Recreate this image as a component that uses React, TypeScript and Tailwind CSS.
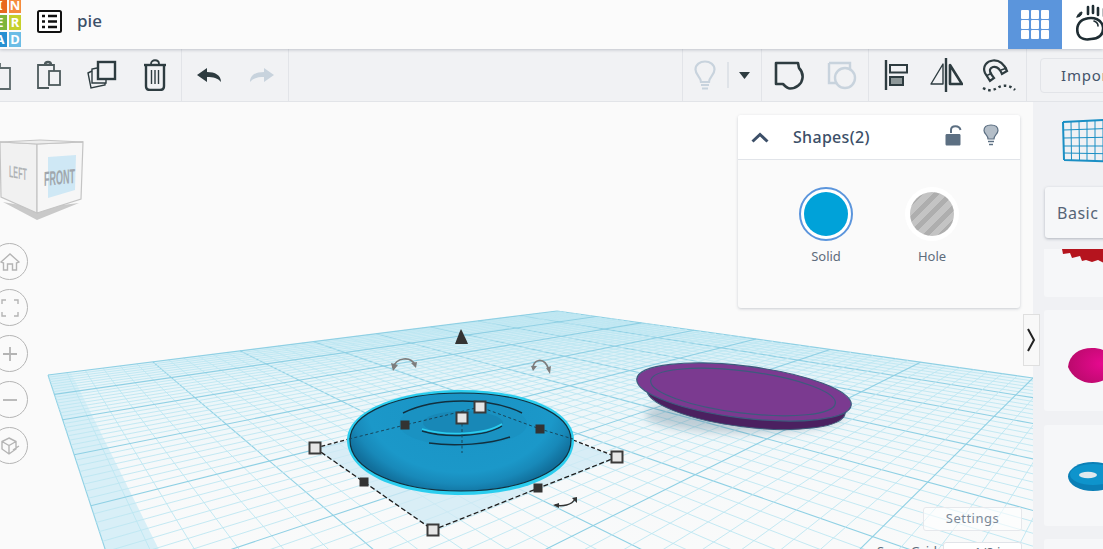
import type { ReactNode } from "react";

const B = [557, 311];
const R = [1033, 378];
const F = [290, 1113];
const L = [48, 375];

// unit square -> image plane, u runs along the left edge, v runs back to front-left
function project(u: number, v: number): [number, number] {
  const dx1 = R[0] - F[0];
  const dx2 = L[0] - F[0];
  const sx = B[0] - R[0] + F[0] - L[0];
  const dy1 = R[1] - F[1];
  const dy2 = L[1] - F[1];
  const sy = B[1] - R[1] + F[1] - L[1];
  const den = dx1 * dy2 - dx2 * dy1;
  const g = (sx * dy2 - dx2 * sy) / den;
  const h = (dx1 * sy - sx * dy1) / den;
  const a = R[0] - B[0] + g * R[0];
  const b = L[0] - B[0] + h * L[0];
  const d = R[1] - B[1] + g * R[1];
  const e = L[1] - B[1] + h * L[1];
  const w = g * u + h * v + 1;
  return [(a * u + b * v + B[0]) / w, (d * u + e * v + B[1]) / w];
}

const U_MAX = 8 / 7;
const MINOR_U = 8;
const MINOR_V = 6;

function pts(list: [number, number][]) {
  return list.map((p) => `${p[0].toFixed(1)},${p[1].toFixed(1)}`).join(" ");
}

function WorkplaneGrid() {
  const lines: ReactNode[] = [];
  for (let i = 0; i <= 8 * MINOR_V; i++) {
    const major = i % MINOR_V === 0;
    const v = i / (8 * MINOR_V);
    const a = project(0, v);
    const b = project(U_MAX, v);
    lines.push(
      <line key={`v${i}`} x1={a[0]} y1={a[1]} x2={b[0]} y2={b[1]} stroke={major ? "#8fd0e4" : "#bde6f2"} strokeWidth={major ? 1.1 : 0.9} />
    );
  }
  for (let i = 0; i <= 8 * MINOR_U; i++) {
    const major = i % MINOR_U === 0;
    const u = i / (7 * MINOR_U);
    const a = project(u, 0);
    const b = project(u, 1);
    lines.push(
      <line key={`u${i}`} x1={a[0]} y1={a[1]} x2={b[0]} y2={b[1]} stroke={major ? "#8fd0e4" : "#bde6f2"} strokeWidth={major ? 1.1 : 0.9} />
    );
  }
  return (
    <g>
      <polygon points={pts([project(0, 0), project(U_MAX, 0), project(U_MAX, 1), project(0, 1)])} fill="url(#plate)" />
      <polygon points={pts([project(0, 0.975), project(U_MAX, 0.975), project(U_MAX, 1), project(0, 1)])} fill="#d8eff7" />
      {lines}
    </g>
  );
}

function Handle({ x, y, dark }: { x: number; y: number; dark?: boolean }) {
  if (dark) return <rect x={x - 4.5} y={y - 4.5} width={9} height={9} fill="#333" />;
  return <rect x={x - 5.5} y={y - 5.5} width={11} height={11} fill="#e6e6e6" stroke="#3a3a3a" strokeWidth={2} />;
}

function Scene() {
  return (
    <svg className="absolute inset-0" width={1033} height={447} viewBox="0 102 1033 447">
      <defs>
        <linearGradient id="plate" x1="0" y1="311" x2="0" y2="549" gradientUnits="userSpaceOnUse">
          <stop offset="0" stopColor="#c7e9f4" />
          <stop offset="0.3" stopColor="#e9f5f9" />
          <stop offset="0.7" stopColor="#f7f9fa" />
          <stop offset="1" stopColor="#f9fafa" />
        </linearGradient>
        <radialGradient id="torus" cx="461" cy="0" r="125" gradientUnits="userSpaceOnUse" gradientTransform="translate(0 405) scale(1 0.72)">
          <stop offset="0" stopColor="#1a93c4" />
          <stop offset="0.75" stopColor="#1b98c9" />
          <stop offset="0.88" stopColor="#1889b9" />
          <stop offset="1" stopColor="#116f9b" />
        </radialGradient>
        <filter id="soft" x="-20%" y="-50%" width="140%" height="200%">
          <feGaussianBlur stdDeviation="4" />
        </filter>
      </defs>
      <WorkplaneGrid />

      {/* selection footprint */}
      <polygon points="315,448 433,530 617,457 480,407" fill="#cfe9f4" opacity={0.75} />
      <path d="M315,448 L433,530 L617,457" fill="none" stroke="#1c1c1c" strokeWidth={1.3} strokeDasharray="5 2.5" />
      <path d="M315,448 L349,439 M573,440 L617,457" fill="none" stroke="#1c1c1c" strokeWidth={1.3} strokeDasharray="4 2.5" />

      {/* torus */}
      <path d="M347,440 C347,411 398,390 461,390 C526,390 574,411 574,440 C574,473 526,495 461,495 C398,495 347,473 347,440 Z" fill="#2bcdee" />
      <path d="M350,440 C350,413 398,393 461,393 C524,393 571,413 571,440 C571,470 524,491 461,491 C398,491 350,470 350,440 Z" fill="url(#torus)" stroke="#12303f" strokeWidth={1.2} />
      <ellipse cx="463" cy="424" rx="64" ry="22" fill="#1a92c2" />
      <ellipse cx="463" cy="423" rx="40" ry="12" fill="#1888b7" />
      <path d="M403,413 C435,397 490,397 522,413" fill="none" stroke="#12303f" strokeWidth={1.5} />
      <path d="M429,443 C455,447 490,444 510,437" fill="none" stroke="#12303f" strokeWidth={1.5} />
      <path d="M422,431 C445,438 485,437 502,426" fill="none" stroke="#12303f" strokeWidth={1.4} />
      <path d="M422,429 C445,436 485,435 502,424" fill="none" stroke="#2bcdee" strokeWidth={1.6} />
      <path d="M349,439 L405,425 L480,407 L540,429 L573,439" fill="none" stroke="#17465c" strokeWidth={1} strokeDasharray="3 2.5" />
      <path d="M462,418 V453" fill="none" stroke="#17465c" strokeWidth={1} strokeDasharray="3 2.5" />

      <Handle x={315} y={448} />
      <Handle x={617} y={457} />
      <Handle x={433} y={530} />
      <Handle x={480} y={407} />
      <Handle x={462} y={418} />
      <Handle x={405} y={425} dark />
      <Handle x={540} y={429} dark />
      <Handle x={364} y={482} dark />
      <Handle x={538} y={488} dark />

      {/* move + rotate gizmos */}
      <path d="M461,329 C463,333 466,339 468,344 H455 C457,339 459,333 461,329 Z" fill="#333" />
      <path d="M393,368 C396,357 411,356 415,365" fill="none" stroke="#7d7d7d" strokeWidth={1.6} />
      <path d="M391,363 L393,371 L398,365 Z M411,363 L417,362 L416,368 Z" fill="#7d7d7d" />
      <path d="M533,369 C532,360 544,355 549,370" fill="none" stroke="#7d7d7d" strokeWidth={1.6} />
      <path d="M531,366 L537,366 L533,371 Z M546,368 L551,366 L550,374 Z" fill="#7d7d7d" />
      <path d="M555,505 C562,507 572,505 575,499" fill="none" stroke="#333" strokeWidth={1.4} />
      <path d="M553,505 L559,503 L559,508 Z M572,498 L577,497 L577,503 Z" fill="#333" />

      {/* purple disc */}
      <ellipse cx="745" cy="415" rx="100" ry="18" fill="#4d6f86" opacity={0.3} filter="url(#soft)" />
      <ellipse cx="746" cy="401" rx="100" ry="26" transform="rotate(7 746 401)" fill="#4b2060" stroke="#3b5a78" strokeWidth={1} />
      <ellipse cx="744" cy="392" rx="108" ry="26" transform="rotate(7 744 392)" fill="#7b3a90" stroke="#3d5b7d" strokeWidth={1.2} />
      <ellipse cx="743" cy="392" rx="93" ry="21" transform="rotate(7 743 392)" fill="none" stroke="#3d5b7d" strokeWidth={1.2} />
    </svg>
  );
}

function ViewCube() {
  return (
    <svg className="absolute left-0 top-[30px]" width={90} height={90} viewBox="0 132 90 90">
      <polygon points="3,202 37,220 79,203 37,208" fill="#c9c9c9" />
      <polygon points="0,142 37,144 37,213 1,197" fill="#f1f1f1" stroke="#c4c4c4" strokeWidth={1.2} />
      <polygon points="37,144 83,142 81,199 37,213" fill="#f6f6f6" stroke="#c4c4c4" strokeWidth={1.2} />
      <polygon points="0,142 40,140 83,142 37,144" fill="#ededed" stroke="#c4c4c4" strokeWidth={1} />
      <polygon points="48,157 76,155 75,190 48,198" fill="#cfe8f5" />
      <text transform="matrix(0.55 0.1 0 1.3 9 177)" fontFamily="'Liberation Sans', sans-serif" fontSize={13} fontWeight={700} fill="#b0b3b6">LEFT</text>
      <text transform="matrix(0.6 -0.06 0 1.35 44 186)" fontFamily="'Liberation Sans', sans-serif" fontSize={15} fontWeight={700} fill="#a0a6ac">FRONT</text>
    </svg>
  );
}

function RoundTool({ children }: { children: ReactNode }) {
  return (
    <div className="flex h-[37px] w-[37px] items-center justify-center rounded-full border border-[#b5b5b5] bg-[#fafafa]">
      {children}
    </div>
  );
}

function ViewTools() {
  const c = { fill: "none", stroke: "#b4b4b4", strokeWidth: 1.4 };
  return (
    <div className="absolute left-[-9px] top-[141px] flex flex-col gap-[9px]">
      <RoundTool>
        <svg width="20" height="20" viewBox="0 0 20 20" {...c}><path d="M1,10 L10,2 L19,10 L16.5,11 V18 H12.5 V12 H7.5 V18 H3.5 V11 Z" /></svg>
      </RoundTool>
      <RoundTool>
        <svg width="18" height="18" viewBox="0 0 18 18" {...c}><path d="M1,5 V1 H5 M13,1 H17 V5 M17,13 V17 H13 M5,17 H1 V13" /></svg>
      </RoundTool>
      <RoundTool>
        <svg width="16" height="16" viewBox="0 0 16 16" {...c} strokeWidth={1.8}><path d="M8,1 V15 M1,8 H15" /></svg>
      </RoundTool>
      <RoundTool>
        <svg width="16" height="16" viewBox="0 0 16 16" {...c} strokeWidth={1.8}><path d="M1,8 H15" /></svg>
      </RoundTool>
      <RoundTool>
        <svg width="20" height="20" viewBox="0 0 20 20" {...c}><path d="M9,2 L16,5.5 V13 L9,18 L2,13 V5.5 Z M2,5.5 L9,9.5 L16,5.5 M9,9.5 V18 M13,14 L19,10" /></svg>
      </RoundTool>
    </div>
  );
}

function Logo() {
  const tiles = [
    ["bg-[#e8691f]", "I"],
    ["bg-[#f58b3d]", "N"],
    ["bg-[#7db53c]", "E"],
    ["bg-[#c6d02b]", "R"],
    ["bg-[#2690d2]", "A"],
    ["bg-[#6cbde6]", "D"],
  ];
  return (
    <div className="-mt-[2px] -ml-[7px] grid grid-cols-[14px_12px] gap-x-[2px] gap-y-[2px] self-start">
      {tiles.map(([color, letter]) => (
        <div key={letter} className={`flex h-[15px] items-center justify-center text-[13px] font-bold text-white ${color}`}>
          {letter}
        </div>
      ))}
    </div>
  );
}

function Header() {
  return (
    <header className="relative z-10 flex h-[49px] shrink-0 items-center overflow-hidden bg-[#fbfbfb] shadow-[0_1px_3px_rgba(80,90,110,0.3)]">
      <Logo />
      <svg className="-mt-[7px] ml-[16px]" width="25" height="23" viewBox="0 0 25 23">
        <rect x="1" y="1" width="23" height="21" rx="1.5" fill="#fff" stroke="#111" strokeWidth="2" />
        <path d="M5,6 H8 M11,6 H20 M5,11.5 H8 M11,11.5 H20 M5,17 H8 M11,17 H20" stroke="#111" strokeWidth="2.4" />
      </svg>
      <span className="-mt-[7px] ml-[15px] text-[17px] font-medium text-[#3c4f68]">pie</span>
      <div className="flex-1" />
      <div className="flex h-full w-[54px] items-center justify-center bg-[#5b95dc]">
        <div className="grid grid-cols-3 gap-[1.5px]">
          {[0, 1, 2, 3, 4, 5, 6, 7, 8].map((i) => (
            <div key={i} className="h-[8.5px] w-[8.5px] rounded-[1px] bg-white" />
          ))}
        </div>
      </div>
      <div className="flex h-full w-[41px] items-center bg-white pl-[14px]">
        <svg className="-mt-[4px] shrink-0" width="36" height="38" viewBox="0 0 36 38" fill="none" stroke="#1f2d33" strokeWidth="2.6" strokeLinecap="round">
          <path d="M9,15 C2,17 0,24 2,30 C4,35 10,36 15,35 C22,35 28,31 27,23 C26,16 18,12 9,15 Z" />
          <path d="M18,17 C21,18 22,20 22,22" strokeWidth="1.6" />
          <path d="M12,3 V10 M17,2 V9 M22,4 V11 M28,5 V12" />
          <path d="M1,13 C2,9 5,8 6,8 C6,11 4,13 1,13 Z" fill="#1f2d33" strokeWidth="1" />
        </svg>
      </div>
    </header>
  );
}

const DARK = "#2e3c40";
const OFF = "#c8d3dd";

function ToolIcon({ w = 53, children }: { w?: number; children: ReactNode }) {
  return (
    <div className="flex h-full shrink-0 items-center justify-center" style={{ width: w }}>
      {children}
    </div>
  );
}

function Toolbar() {
  return (
    <div className="flex h-[53px] shrink-0 items-center border-b border-[#e2e4e8] bg-[#f1f2f4]">
      <div className="-ml-[31px] flex h-full shrink-0 border-r border-[#e2e4e8]">
        <ToolIcon>
          <svg className="overflow-visible" width="30" height="30" viewBox="0 0 30 30" fill="none" stroke="#5d6a6c" strokeWidth="1.8">
            <path d="M10,4 H19 V8 H29 V29 H10 Z" />
          </svg>
        </ToolIcon>
        <ToolIcon>
          <svg width="26" height="30" viewBox="0 0 26 30" fill="none" stroke="#4d5a5c" strokeWidth="1.8">
            <path d="M7,5 H2 V28 H13 M7,5 H18 V11" />
            <path d="M9,5 C9,1 15,1 15,5" strokeWidth="2.4" />
            <rect x="13" y="11" width="11" height="14" fill="#f1f2f4" />
          </svg>
        </ToolIcon>
        <ToolIcon>
          <svg width="30" height="30" viewBox="0 0 30 30" fill="none" stroke={DARK}>
            <rect x="11" y="2" width="17" height="17" strokeWidth="2.4" />
            <path d="M10,8 L5,9 V23 H19 V20" strokeWidth="1.4" />
            <path d="M5,11 L1,13 L4,28 L18,25 V23" strokeWidth="1.4" />
          </svg>
        </ToolIcon>
        <ToolIcon>
          <svg width="24" height="32" viewBox="0 0 24 32" fill="none" stroke={DARK}>
            <path d="M1,6 H23" strokeWidth="2.4" />
            <path d="M8,5 C8,0 16,0 16,5" strokeWidth="1.8" />
            <path d="M3,7 V27 C3,30 5,31 7,31 H17 C19,31 21,30 21,27 V7" strokeWidth="2.4" />
            <path d="M8.5,11 V25 M12,11 V25 M15.5,11 V25" strokeWidth="1.4" />
          </svg>
        </ToolIcon>
      </div>
      <div className="flex h-full w-[107px] shrink-0 justify-center border-r border-[#e2e4e8]">
        <ToolIcon>
          <svg width="24" height="15" viewBox="0 0 24 15" fill={DARK}>
            <path d="M0,7 L10,0 V4 C18,4 24,7 24,14 C21,10 16,9 10,9 V14 Z" />
          </svg>
        </ToolIcon>
        <ToolIcon>
          <svg width="24" height="15" viewBox="0 0 24 15" fill={OFF}>
            <path d="M24,7 L14,0 V4 C6,4 0,7 0,14 C3,10 8,9 14,9 V14 Z" />
          </svg>
        </ToolIcon>
      </div>
      <div className="flex-1" />
      <div className="flex h-full w-[80px] shrink-0 items-center border-x border-[#e2e4e8]">
        <ToolIcon w={44}>
          <svg width="22" height="31" viewBox="0 0 22 31" fill="none" stroke={OFF} strokeWidth="2.2">
            <path d="M7,22 C7,17 1.5,15 1.5,9.5 C1.5,4.5 6,1.5 11,1.5 C16,1.5 20.5,4.5 20.5,9.5 C20.5,15 15,17 15,22 Z" />
            <path d="M7,25 H15 M8,28.5 H14" />
          </svg>
        </ToolIcon>
        <div className="h-[26px] w-[2px] bg-[#dfe3e8]" />
        <ToolIcon w={30}>
          <svg width="11" height="7" viewBox="0 0 11 7" fill={DARK}><path d="M0,0 H11 L5.5,7 Z" /></svg>
        </ToolIcon>
      </div>
      <div className="flex h-full w-[107px] shrink-0 border-r border-[#e2e4e8]">
        <ToolIcon>
          <svg width="30" height="29" viewBox="0 0 30 29" fill="none" stroke={DARK} strokeWidth="2.6" strokeLinejoin="round">
            <path d="M2,2 H24 L25,7 C28,10 29,13 28.5,17 C28,23 22,27.5 16,27.5 C13,27.5 11,25 9,23 H2 Z" />
          </svg>
        </ToolIcon>
        <ToolIcon>
          <svg width="30" height="29" viewBox="0 0 30 29" fill="none" stroke={OFF} strokeWidth="2.4">
            <path d="M2,2 H23 V8 M2,2 V22 H9" />
            <circle cx="18" cy="17" r="10" />
          </svg>
        </ToolIcon>
      </div>
      <div className="flex h-full w-[158px] shrink-0 items-center border-r border-[#e2e4e8] pl-[2px]">
        <ToolIcon w={50}>
          <svg width="24" height="32" viewBox="0 0 24 32" fill="none" stroke={DARK}>
            <path d="M2,1 V31" strokeWidth="2.4" />
            <rect x="6" y="6" width="17" height="7.5" strokeWidth="2" />
            <rect x="6" y="18" width="13" height="8" strokeWidth="2" fill="#8e9899" />
          </svg>
        </ToolIcon>
        <ToolIcon w={50}>
          <svg width="34" height="34" viewBox="0 0 34 34" fill="none" stroke={DARK} strokeLinejoin="round">
            <path d="M17,0 V34" strokeWidth="2.4" />
            <path d="M14,6 V26 H2 Z" strokeWidth="1.4" />
            <path d="M21,7 V26 H33 Z" strokeWidth="2.6" />
          </svg>
        </ToolIcon>
        <ToolIcon w={55}>
          <svg width="34" height="33" viewBox="0 0 34 33" fill="none" stroke={DARK}>
            <path d="M8,22 L3,14 C0,7 5,2 11,1.5 C17,1 22,5 25,12 L20,15 C18,10 15,7 11,8 C8,9 7,11 9,15 L12,19 Z" strokeWidth="2.2" />
            <path d="M4,17 L10,14 M19,11 L25,9" strokeWidth="1.4" />
            <path d="M1,29 C8,33 12,31 17,28 C22,26 28,26 33,31" strokeWidth="2.4" strokeDasharray="2.5 3" />
          </svg>
        </ToolIcon>
      </div>
      <div className="-mr-[57px] ml-[13px] flex h-[35px] w-[120px] shrink-0 items-center rounded-[4px] border border-[#e2e4e8] pl-[20px] text-[15px] tracking-[0.8px] text-[#44546a]">
        Import
      </div>
    </div>
  );
}

function ShapesPanel() {
  return (
    <div className="absolute left-[738px] top-[13px] h-[193px] w-[282px] rounded-[3px] bg-[#fafafa] shadow-[0_1px_3px_rgba(60,70,90,0.25)]">
      <div className="flex h-[45px] items-center rounded-t-[3px] border-b border-[#e1e4e9] bg-white pl-[13px]">
        <svg width="18" height="11" viewBox="0 0 18 11" fill="none" stroke="#3c4f68" strokeWidth="3"><path d="M1.5,9.5 L9,2.5 L16.5,9.5" /></svg>
        <span className="ml-[24px] text-[16px] font-medium tracking-[0.3px] text-[#3c4f68]">Shapes(2)</span>
        <div className="ml-auto mr-[21px] flex gap-[21px]">
          <svg className="-mt-[3px]" width="17" height="21" viewBox="0 0 17 21" fill="#5c6f82">
            <path d="M2,9 H14 C15,9 15.5,9.5 15.5,10.5 V19 C15.5,20 15,20.5 14,20.5 H2 C1,20.5 0.5,20 0.5,19 V10.5 C0.5,9.5 1,9 2,9 Z" />
            <path d="M6,8 V5 C6,0 14.5,0 15.5,5" fill="none" stroke="#5c6f82" strokeWidth="2" />
          </svg>
          <svg className="-mt-[4px]" width="16" height="22" viewBox="0 0 16 22" fill="#b4bec8" stroke="#5c6f82" strokeWidth="1.2">
            <path d="M5,15 C5,11 1,10 1,6.5 C1,3 4,1 8,1 C12,1 15,3 15,6.5 C15,10 11,11 11,15 Z" />
            <path d="M5,17.5 H11 M6,20.5 H10" fill="none" strokeWidth="1.5" />
          </svg>
        </div>
      </div>
      <div className="flex pl-[61px] pt-[27px]">
        <div className="flex w-[54px] flex-col items-center">
          <div className="flex h-[54px] w-[54px] items-center justify-center rounded-full border-2 border-[#5b95dc] bg-white">
            <div className="h-[44px] w-[44px] rounded-full bg-[#00a2d9]" />
          </div>
          <span className="mt-[6px] text-[13px] text-[#5e6c7c]">Solid</span>
        </div>
        <div className="ml-[52px] flex w-[54px] flex-col items-center">
          <div className="flex h-[54px] w-[54px] items-center justify-center rounded-full bg-white">
            <div className="h-[44px] w-[44px] rounded-full bg-[repeating-linear-gradient(135deg,#c4c4c4_0,#c4c4c4_6px,#aeaeae_6px,#aeaeae_11px)]" />
          </div>
          <span className="mt-[6px] text-[13px] text-[#5e6c7c]">Hole</span>
        </div>
      </div>
    </div>
  );
}

function Sidebar() {
  return (
    <aside className="relative flex w-[70px] shrink-0 flex-col overflow-hidden bg-[#f0f1f4]">
      <svg className="absolute left-[29px] top-[16px]" width="60" height="46" viewBox="0 0 60 46" fill="none" stroke="#1b8fc4">
        <path d="M1,4 L60,1 M2,42 L60,44 M1,4 L2,42" strokeWidth="2" />
        <path d="M1.3,12 L60,10 M1.6,20 L60,19 M1.8,28 L60,28 M2,35 L60,36" strokeWidth="1" />
        <path d="M9,3.6 L9.5,42 M17,3.2 L17.5,42.6 M25,2.8 L25,43 M33,2.4 L33,43 M41,2 L41,43.4" strokeWidth="1" />
      </svg>
      <div className="ml-[11px] mt-[147px] h-[48px] w-[120px] shrink-0 rounded-b-[3px] bg-[#f6f7f9]">
        <svg className="ml-[18px]" width="60" height="14" viewBox="0 0 60 14" fill="#b5141e">
          <path d="M0,0 H60 V9 L50,11 L46,9 L42,14 L36,11 L30,13 L24,11 L20,12 L18,7 L10,9 L8,4 L1,5 Z" />
        </svg>
      </div>
      <div className="ml-[11px] mt-[13px] h-[101px] w-[120px] shrink-0 rounded-[3px] bg-[#f6f7f9] pl-[24px] pt-[38px]">
        <svg className="overflow-visible" width="48" height="35" viewBox="0 0 48 35">
          <defs>
            <radialGradient id="dome" cx="0.7" cy="0.45" r="0.75">
              <stop offset="0" stopColor="#e6098f" />
              <stop offset="1" stopColor="#b80a6a" />
            </radialGradient>
          </defs>
          <path d="M0,19 C1,7 11,0 24,0 C37,0 47,7 48,19 C44,29 34,35 24,35 C14,35 4,29 0,19 Z" fill="url(#dome)" />
        </svg>
      </div>
      <div className="ml-[11px] mt-[14px] h-[101px] w-[120px] shrink-0 rounded-[3px] bg-[#f6f7f9] pl-[24px] pt-[37px]">
        <svg className="overflow-visible" width="50" height="29" viewBox="0 0 50 29">
          <ellipse cx="25" cy="14.5" rx="25" ry="14.5" fill="#0b7fb6" />
          <ellipse cx="25" cy="12.5" rx="23" ry="10.5" fill="#0e94cc" />
          <ellipse cx="20" cy="13" rx="9" ry="3.2" fill="#dfe9ee" />
        </svg>
      </div>
      <div className="ml-[11px] mt-[13px] h-[40px] w-[120px] shrink-0 rounded-[3px] bg-[#f6f7f9]" />
      <div className="absolute left-[12px] top-[85px] flex h-[51px] w-[120px] items-center rounded-[3px] bg-[#f6f7f9] pl-[12px] text-[16px] tracking-[0.5px] text-[#566577] shadow-[0_1px_3px_rgba(60,70,90,0.35)]">
        Basic Shapes
      </div>
    </aside>
  );
}

export default function App() {
  return (
    <div className="flex h-screen w-screen flex-col overflow-hidden bg-[#fafafa] font-['Noto_Sans',sans-serif]">
      <Header />
      <Toolbar />
      <div className="flex min-h-0 flex-1">
        <main className="relative min-w-0 flex-1 overflow-hidden">
          <Scene />
          <ViewCube />
          <ViewTools />
          <ShapesPanel />
          <div className="absolute left-[923px] top-[405px] flex h-[24px] w-[99px] items-center justify-center rounded-[3px] border border-[#e6e8ec] bg-white/60 text-[13px] tracking-[0.5px] text-[#7c8897]">
            Settings
          </div>
          <div className="absolute left-[877px] top-[440px] flex items-start">
            <span className="text-[13px] text-[#5e6c7c]">Snap Grid</span>
            <div className="ml-[6px] h-[24px] w-[79px] rounded-[3px] border border-[#e1e4e9] bg-white pl-[30px] text-[13px] text-[#5e6c7c]">1/8 in</div>
          </div>
        </main>
        <Sidebar />
      </div>
      <div className="pointer-events-none absolute left-[1023px] top-[314px] flex h-[52px] w-[17px] items-center justify-center border border-[#dfdfdf] bg-[#f8f8f8]">
        <svg width="9" height="24" viewBox="0 0 9 24" fill="none" stroke="#222" strokeWidth="2"><path d="M1,1 L7,12 L1,23" /></svg>
      </div>
    </div>
  );
}
